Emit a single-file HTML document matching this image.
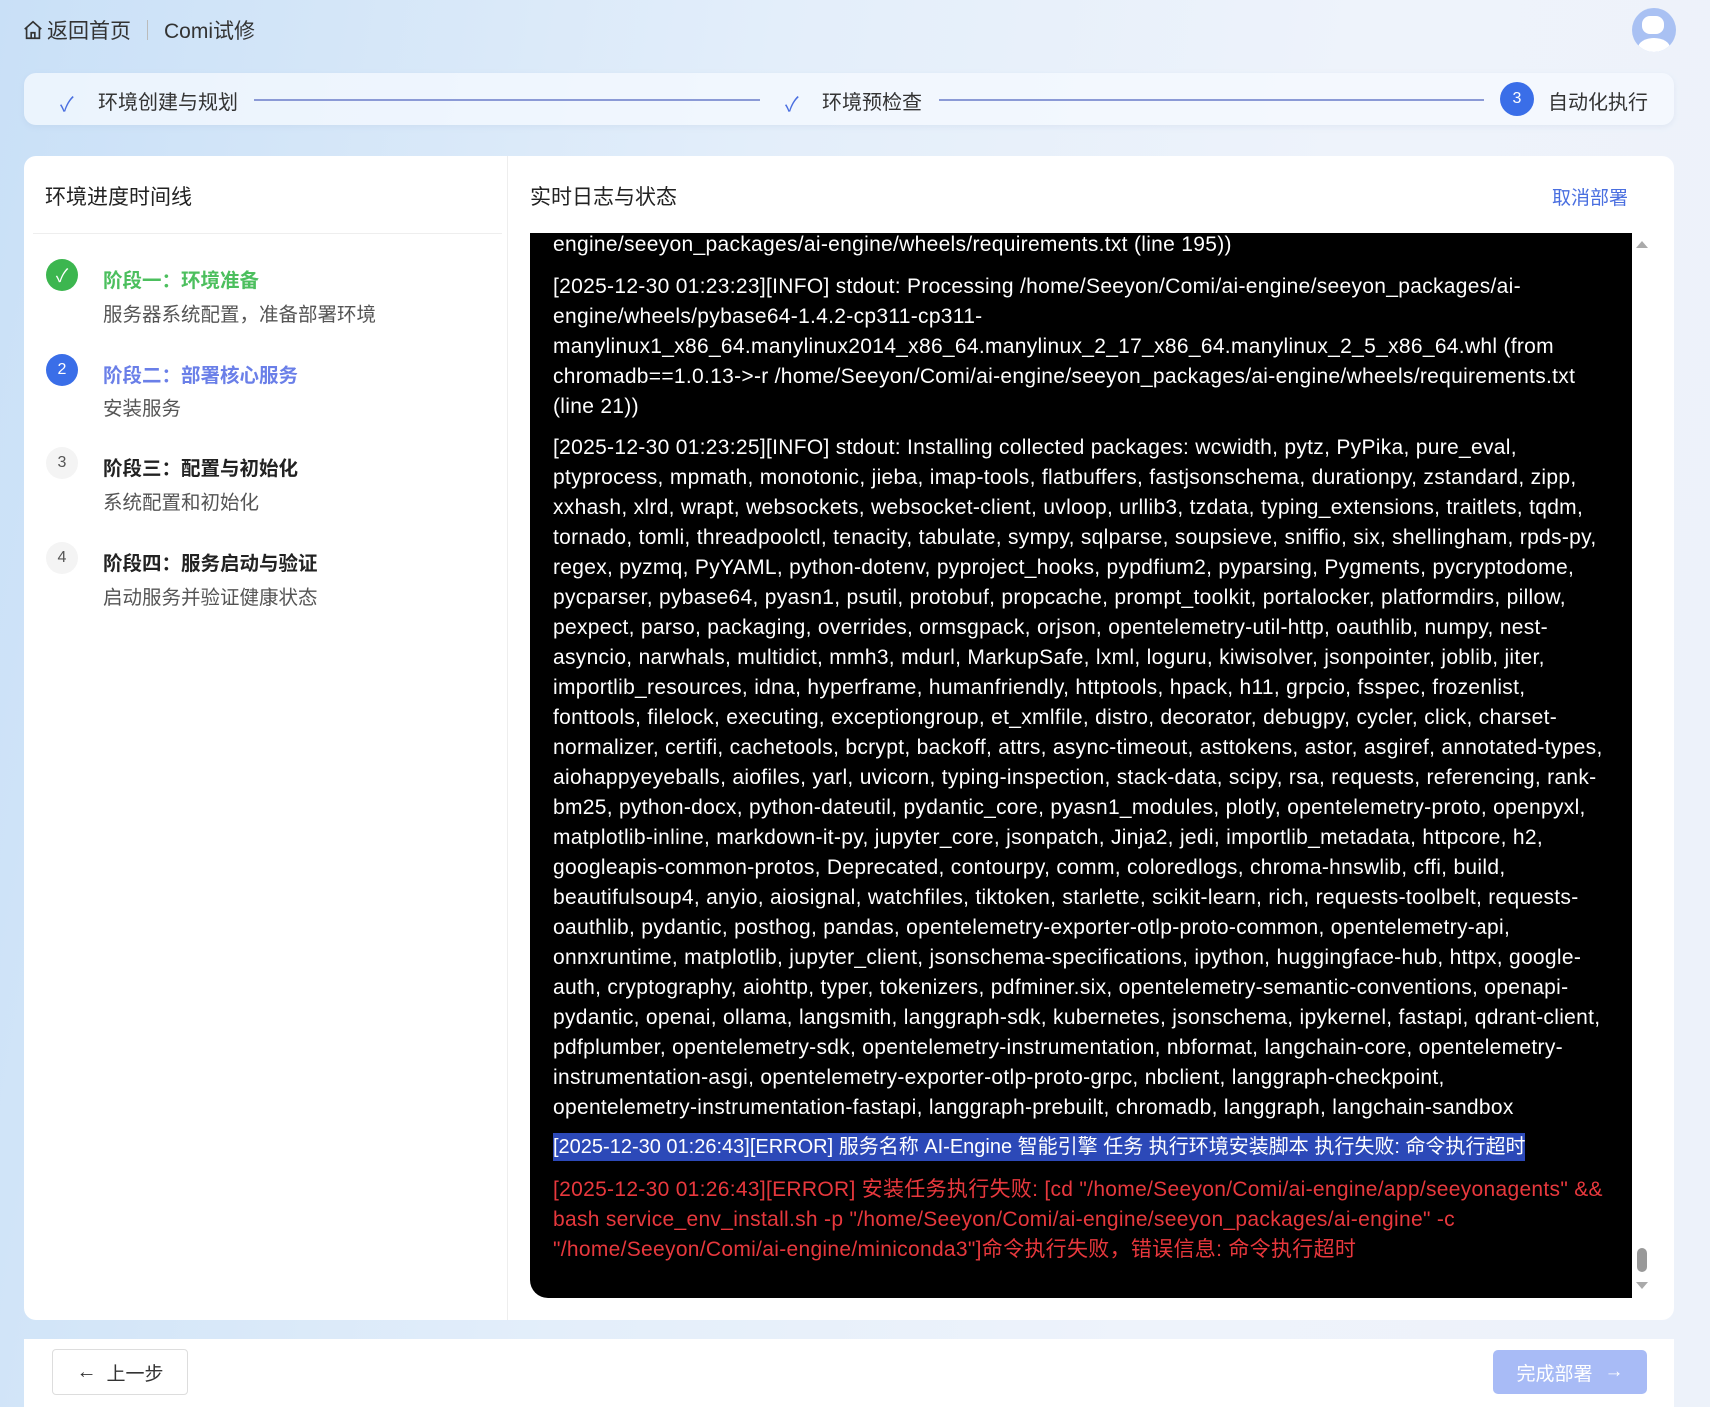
<!DOCTYPE html>
<html><head><meta charset="utf-8"><style>
*{margin:0;padding:0;box-sizing:border-box}
body{width:1710px;height:1407px;overflow:hidden;position:relative;font-family:"Liberation Sans","Noto Sans CJK SC",sans-serif;background:linear-gradient(100deg,#c9e0f7 0%,#e3eefa 40%,#eef3fb 70%,#edf2fa 100%);color:#222}
.abs{position:absolute}
.hdr{left:22px;top:16px;font-size:21px;color:#333;display:flex;align-items:center;height:28px}
.steps{left:24px;top:73px;width:1650px;height:52px;background:rgba(245,249,255,.75);border-radius:12px;box-shadow:0 2px 6px rgba(150,170,200,.15)}
.card{left:24px;top:156px;width:1650px;height:1164px;background:#fff;border-radius:12px}
.t{font-size:21px;color:#222}
.log{left:530px;top:233px;width:1102px;height:1065px;background:#000;border-radius:0 0 0 18px;overflow:hidden}
.ln{white-space:nowrap;font-size:21px;letter-spacing:0.3px;line-height:30px;color:#fff;position:absolute;left:23px}
.stt{font-size:19.5px;font-weight:bold}
.sub{font-size:19.5px;color:#555}
.circ{width:32px;height:32px;border-radius:50%;display:flex;align-items:center;justify-content:center;font-size:16px}
</style></head><body>
<div class="abs hdr"><svg width="22" height="22" viewBox="0 0 24 24" fill="none" stroke="#333" stroke-width="1.8"><path d="M3 11 L12 3 L21 11 M5 9 V21 H19 V9 M10 21 V15 H14 V21"/></svg><span style="margin-left:3px">返回首页</span><span style="display:inline-block;width:1px;height:20px;background:#bbb;margin:0 16px"></span><span>Comi试修</span></div>
<div class="abs" style="left:1632px;top:8px;width:44px;height:44px;border-radius:50%;background:#a9c1f3;overflow:hidden"><div class="abs" style="left:10px;top:8px;width:22px;height:18px;border-radius:8px;background:#fff"></div><div class="abs" style="left:6px;top:30px;width:32px;height:20px;border-radius:50%;background:#fff"></div></div>
<div class="abs steps"></div>
<div class="abs" style="left:60px;top:88px;color:#4a6fe0;font-size:20px">✓</div>
<div class="abs t" style="left:98px;top:86px;font-size:20px;color:#333">环境创建与规划</div>
<div class="abs" style="left:254px;top:99px;width:506px;height:2px;background:#8b9ad6"></div>
<div class="abs" style="left:785px;top:88px;color:#4a6fe0;font-size:20px">✓</div>
<div class="abs t" style="left:822px;top:86px;font-size:20px;color:#333">环境预检查</div>
<div class="abs" style="left:939px;top:99px;width:545px;height:2px;background:#8b9ad6"></div>
<div class="abs circ" style="left:1500px;top:82px;width:34px;height:34px;background:#3a6ee8;color:#fff">3</div>
<div class="abs t" style="left:1548px;top:86px;font-size:20px;color:#333">自动化执行</div>
<div class="abs card"></div>
<div class="abs" style="left:507px;top:156px;width:1px;height:1164px;background:#eee"></div>
<div class="abs t" style="left:45px;top:181px">环境进度时间线</div>
<div class="abs" style="left:33px;top:233px;width:469px;height:1px;background:#eee"></div>
<div class="abs circ" style="left:46px;top:259px;background:#3cb64f;color:#fff;font-size:18px">✓</div>
<div class="abs stt" style="left:103px;top:264px;color:#4cbf5e">阶段一：环境准备</div>
<div class="abs sub" style="left:103px;top:298px">服务器系统配置，准备部署环境</div>
<div class="abs circ" style="left:46px;top:354px;background:#3a6ee8;color:#fff">2</div>
<div class="abs stt" style="left:103px;top:359px;color:#6a7fe8">阶段二：部署核心服务</div>
<div class="abs sub" style="left:103px;top:392px">安装服务</div>
<div class="abs circ" style="left:46px;top:447px;background:#f4f4f4;color:#555">3</div>
<div class="abs stt" style="left:103px;top:452px;color:#222">阶段三：配置与初始化</div>
<div class="abs sub" style="left:103px;top:486px">系统配置和初始化</div>
<div class="abs circ" style="left:46px;top:542px;background:#f4f4f4;color:#555">4</div>
<div class="abs stt" style="left:103px;top:547px;color:#222">阶段四：服务启动与验证</div>
<div class="abs sub" style="left:103px;top:581px">启动服务并验证健康状态</div>
<div class="abs t" style="left:530px;top:181px">实时日志与状态</div>
<div class="abs" style="left:1552px;top:183px;font-size:19px;color:#4a6fe0">取消部署</div>
<div class="abs log">
<div class="ln" style="top:-3px">engine/seeyon_packages/ai-engine/wheels/requirements.txt (line 195))</div>
<div class="ln" style="top:39px">[2025-12-30 01:23:23][INFO] stdout: Processing /home/Seeyon/Comi/ai-engine/seeyon_packages/ai-</div>
<div class="ln" style="top:69px">engine/wheels/pybase64-1.4.2-cp311-cp311-</div>
<div class="ln" style="top:99px">manylinux1_x86_64.manylinux2014_x86_64.manylinux_2_17_x86_64.manylinux_2_5_x86_64.whl (from</div>
<div class="ln" style="top:129px">chromadb==1.0.13->-r /home/Seeyon/Comi/ai-engine/seeyon_packages/ai-engine/wheels/requirements.txt</div>
<div class="ln" style="top:159px">(line 21))</div>
<div class="ln" style="top:200px">[2025-12-30 01:23:25][INFO] stdout: Installing collected packages: wcwidth, pytz, PyPika, pure_eval,</div>
<div class="ln" style="top:230px">ptyprocess, mpmath, monotonic, jieba, imap-tools, flatbuffers, fastjsonschema, durationpy, zstandard, zipp,</div>
<div class="ln" style="top:260px">xxhash, xlrd, wrapt, websockets, websocket-client, uvloop, urllib3, tzdata, typing_extensions, traitlets, tqdm,</div>
<div class="ln" style="top:290px">tornado, tomli, threadpoolctl, tenacity, tabulate, sympy, sqlparse, soupsieve, sniffio, six, shellingham, rpds-py,</div>
<div class="ln" style="top:320px">regex, pyzmq, PyYAML, python-dotenv, pyproject_hooks, pypdfium2, pyparsing, Pygments, pycryptodome,</div>
<div class="ln" style="top:350px">pycparser, pybase64, pyasn1, psutil, protobuf, propcache, prompt_toolkit, portalocker, platformdirs, pillow,</div>
<div class="ln" style="top:380px">pexpect, parso, packaging, overrides, ormsgpack, orjson, opentelemetry-util-http, oauthlib, numpy, nest-</div>
<div class="ln" style="top:410px">asyncio, narwhals, multidict, mmh3, mdurl, MarkupSafe, lxml, loguru, kiwisolver, jsonpointer, joblib, jiter,</div>
<div class="ln" style="top:440px">importlib_resources, idna, hyperframe, humanfriendly, httptools, hpack, h11, grpcio, fsspec, frozenlist,</div>
<div class="ln" style="top:470px">fonttools, filelock, executing, exceptiongroup, et_xmlfile, distro, decorator, debugpy, cycler, click, charset-</div>
<div class="ln" style="top:500px">normalizer, certifi, cachetools, bcrypt, backoff, attrs, async-timeout, asttokens, astor, asgiref, annotated-types,</div>
<div class="ln" style="top:530px">aiohappyeyeballs, aiofiles, yarl, uvicorn, typing-inspection, stack-data, scipy, rsa, requests, referencing, rank-</div>
<div class="ln" style="top:560px">bm25, python-docx, python-dateutil, pydantic_core, pyasn1_modules, plotly, opentelemetry-proto, openpyxl,</div>
<div class="ln" style="top:590px">matplotlib-inline, markdown-it-py, jupyter_core, jsonpatch, Jinja2, jedi, importlib_metadata, httpcore, h2,</div>
<div class="ln" style="top:620px">googleapis-common-protos, Deprecated, contourpy, comm, coloredlogs, chroma-hnswlib, cffi, build,</div>
<div class="ln" style="top:650px">beautifulsoup4, anyio, aiosignal, watchfiles, tiktoken, starlette, scikit-learn, rich, requests-toolbelt, requests-</div>
<div class="ln" style="top:680px">oauthlib, pydantic, posthog, pandas, opentelemetry-exporter-otlp-proto-common, opentelemetry-api,</div>
<div class="ln" style="top:710px">onnxruntime, matplotlib, jupyter_client, jsonschema-specifications, ipython, huggingface-hub, httpx, google-</div>
<div class="ln" style="top:740px">auth, cryptography, aiohttp, typer, tokenizers, pdfminer.six, opentelemetry-semantic-conventions, openapi-</div>
<div class="ln" style="top:770px">pydantic, openai, ollama, langsmith, langgraph-sdk, kubernetes, jsonschema, ipykernel, fastapi, qdrant-client,</div>
<div class="ln" style="top:800px">pdfplumber, opentelemetry-sdk, opentelemetry-instrumentation, nbformat, langchain-core, opentelemetry-</div>
<div class="ln" style="top:830px">instrumentation-asgi, opentelemetry-exporter-otlp-proto-grpc, nbclient, langgraph-checkpoint,</div>
<div class="ln" style="top:860px">opentelemetry-instrumentation-fastapi, langgraph-prebuilt, chromadb, langgraph, langchain-sandbox</div>
<div class="ln" style="top:900px;background:#2c49b8;height:28px;line-height:28px;letter-spacing:0;font-size:20px">[2025-12-30 01:26:43][ERROR] 服务名称 AI-Engine 智能引擎 任务 执行环境安装脚本 执行失败: 命令执行超时</div>
<div class="ln" style="top:942px;color:#e8383d">[2025-12-30 01:26:43][ERROR] 安装任务执行失败: [cd "/home/Seeyon/Comi/ai-engine/app/seeyonagents" &amp;&amp;</div>
<div class="ln" style="top:972px;color:#e8383d">bash service_env_install.sh -p "/home/Seeyon/Comi/ai-engine/seeyon_packages/ai-engine" -c</div>
<div class="ln" style="top:1002px;color:#e8383d">"/home/Seeyon/Comi/ai-engine/miniconda3"]命令执行失败，错误信息: 命令执行超时</div>
</div>
<div class="abs" style="left:1636px;top:241px;width:0;height:0;border-left:6px solid transparent;border-right:6px solid transparent;border-bottom:7px solid #aaa"></div>
<div class="abs" style="left:1637px;top:1248px;width:10px;height:24px;border-radius:5px;background:#999"></div>
<div class="abs" style="left:1636px;top:1282px;width:0;height:0;border-left:6px solid transparent;border-right:6px solid transparent;border-top:7px solid #aaa"></div>
<div class="abs" style="left:24px;top:1339px;width:1650px;height:68px;background:#fff"></div>
<div class="abs" style="left:52px;top:1349px;width:136px;height:46px;border:1px solid #ddd;border-radius:4px;background:#fff;display:flex;align-items:center;justify-content:center;font-size:19px;color:#333"><span style="margin-right:10px;font-size:20px">←</span>上一步</div>
<div class="abs" style="left:1493px;top:1350px;width:154px;height:44px;border-radius:5px;background:#a8bbf6;display:flex;align-items:center;justify-content:center;font-size:19px;color:#fff">完成部署<span style="margin-left:12px">→</span></div>
</body></html>
